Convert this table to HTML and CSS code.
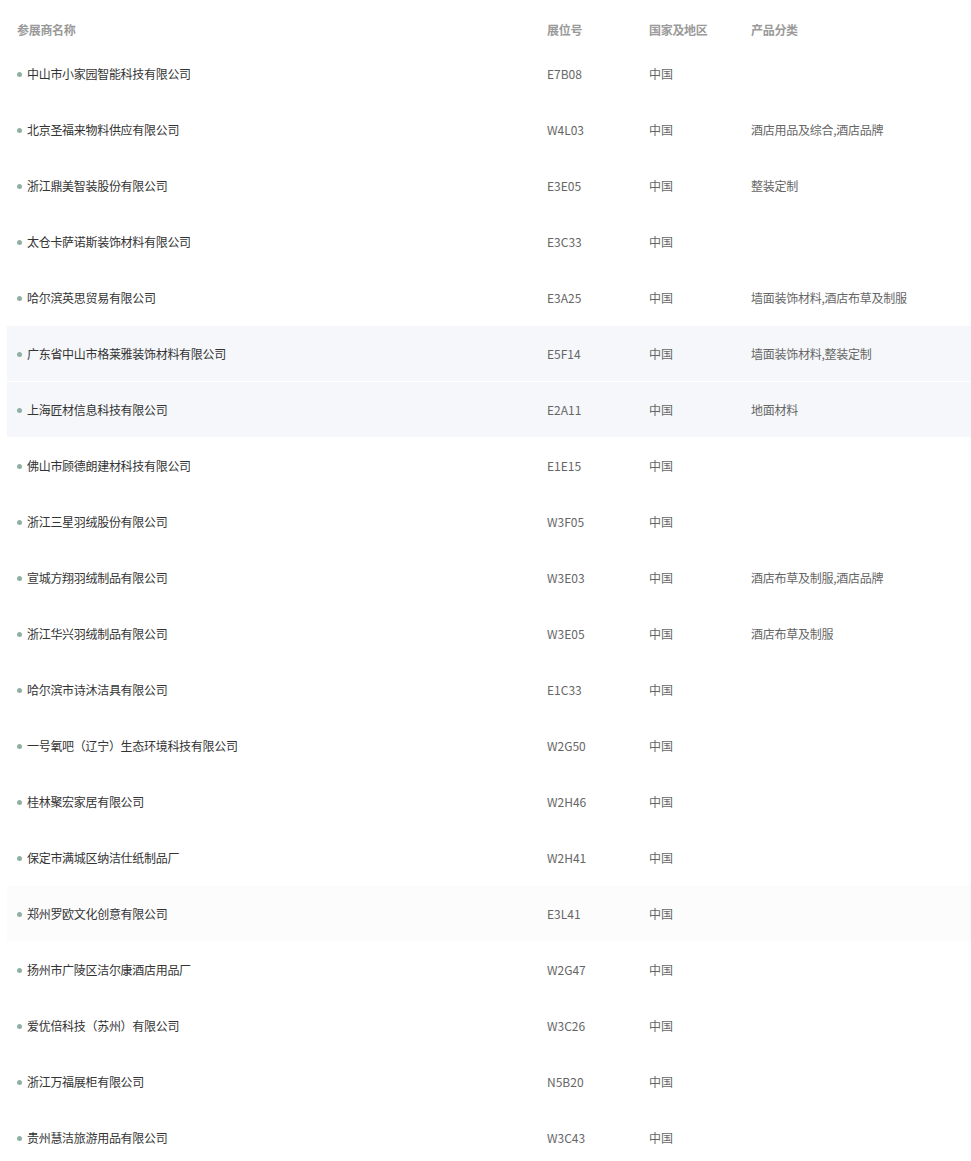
FILE: index.html
```html
<!DOCTYPE html>
<html lang="zh-CN">
<head>
  <meta charset="UTF-8">
  <meta name="viewport" content="width=device-width, initial-scale=1.0">
  <title>参展商列表</title>
  <link rel="stylesheet" href="styles.css">
</head>
<body>
  <div class="list-wrap">
    <table class="exhibitors">
      <colgroup>
        <col class="col-name">
        <col class="col-booth">
        <col class="col-country">
        <col class="col-cat">
      </colgroup>
      <thead>
        <tr>
          <th>参展商名称</th>
          <th>展位号</th>
          <th>国家及地区</th>
          <th>产品分类</th>
        </tr>
      </thead>
      <tbody>
        <tr><td class="name">中山市小家园智能科技有限公司</td><td>E7B08</td><td>中国</td><td class="cat"></td></tr>
        <tr><td class="name">北京圣福来物料供应有限公司</td><td>W4L03</td><td>中国</td><td class="cat">酒店用品及综合,酒店品牌</td></tr>
        <tr><td class="name">浙江鼎美智装股份有限公司</td><td>E3E05</td><td>中国</td><td class="cat">整装定制</td></tr>
        <tr><td class="name">太仓卡萨诺斯装饰材料有限公司</td><td>E3C33</td><td>中国</td><td class="cat"></td></tr>
        <tr><td class="name">哈尔滨英思贸易有限公司</td><td>E3A25</td><td>中国</td><td class="cat">墙面装饰材料,酒店布草及制服</td></tr>
        <tr class="active"><td class="name">广东省中山市格莱雅装饰材料有限公司</td><td>E5F14</td><td>中国</td><td class="cat">墙面装饰材料,整装定制</td></tr>
        <tr class="active"><td class="name">上海匠材信息科技有限公司</td><td>E2A11</td><td>中国</td><td class="cat">地面材料</td></tr>
        <tr><td class="name">佛山市顾德朗建材科技有限公司</td><td>E1E15</td><td>中国</td><td class="cat"></td></tr>
        <tr><td class="name">浙江三星羽绒股份有限公司</td><td>W3F05</td><td>中国</td><td class="cat"></td></tr>
        <tr><td class="name">宣城方翔羽绒制品有限公司</td><td>W3E03</td><td>中国</td><td class="cat">酒店布草及制服,酒店品牌</td></tr>
        <tr><td class="name">浙江华兴羽绒制品有限公司</td><td>W3E05</td><td>中国</td><td class="cat">酒店布草及制服</td></tr>
        <tr><td class="name">哈尔滨市诗沐洁具有限公司</td><td>E1C33</td><td>中国</td><td class="cat"></td></tr>
        <tr><td class="name">一号氧吧（辽宁）生态环境科技有限公司</td><td>W2G50</td><td>中国</td><td class="cat"></td></tr>
        <tr><td class="name">桂林聚宏家居有限公司</td><td>W2H46</td><td>中国</td><td class="cat"></td></tr>
        <tr><td class="name">保定市满城区纳洁仕纸制品厂</td><td>W2H41</td><td>中国</td><td class="cat"></td></tr>
        <tr class="fading"><td class="name">郑州罗欧文化创意有限公司</td><td>E3L41</td><td>中国</td><td class="cat"></td></tr>
        <tr><td class="name">扬州市广陵区洁尔康酒店用品厂</td><td>W2G47</td><td>中国</td><td class="cat"></td></tr>
        <tr><td class="name">爱优倍科技（苏州）有限公司</td><td>W3C26</td><td>中国</td><td class="cat"></td></tr>
        <tr><td class="name">浙江万福展柜有限公司</td><td>N5B20</td><td>中国</td><td class="cat"></td></tr>
        <tr><td class="name">贵州慧洁旅游用品有限公司</td><td>W3C43</td><td>中国</td><td class="cat"></td></tr>
      </tbody>
    </table>
  </div>
</body>
</html>
```

FILE: styles.css
```css
body {
  margin: 0;
  padding: 0;
  background-color: #fff;
  font-family: "Noto Sans CJK SC", "Noto Sans", sans-serif;
  font-size: 12px;
  color: #666;
  overflow: hidden;
}

.list-wrap {
  padding-left: 7px;
}

.exhibitors {
  width: 964px;
  border-collapse: collapse;
  table-layout: fixed;
}

.col-name {
  width: 530px;
}

.col-booth,
.col-country {
  width: 102px;
}

.exhibitors th {
  height: 16px;
  padding: 22px 10px 8px;
  line-height: 16px;
  text-align: left;
  font-weight: bold;
  color: #9a9a9a;
  letter-spacing: -0.3px;
}

.exhibitors td {
  height: 55px;
  padding: 0 10px;
  line-height: 16px;
  vertical-align: middle;
  border-bottom: 1px solid #fff;
  white-space: nowrap;
}

.exhibitors td.name {
  color: #333;
  letter-spacing: -0.3px;
}

.exhibitors td.cat {
  letter-spacing: -0.25px;
}

.exhibitors td.name::before {
  content: "";
  display: inline-block;
  width: 5px;
  height: 5px;
  margin-right: 5px;
  border-radius: 50%;
  background-color: #8fb0a3;
  vertical-align: 2px;
}

.exhibitors tr.active td {
  background-color: #f5f7fa;
}

.exhibitors tr.fading td {
  background-color: #fcfcfd;
}
```
